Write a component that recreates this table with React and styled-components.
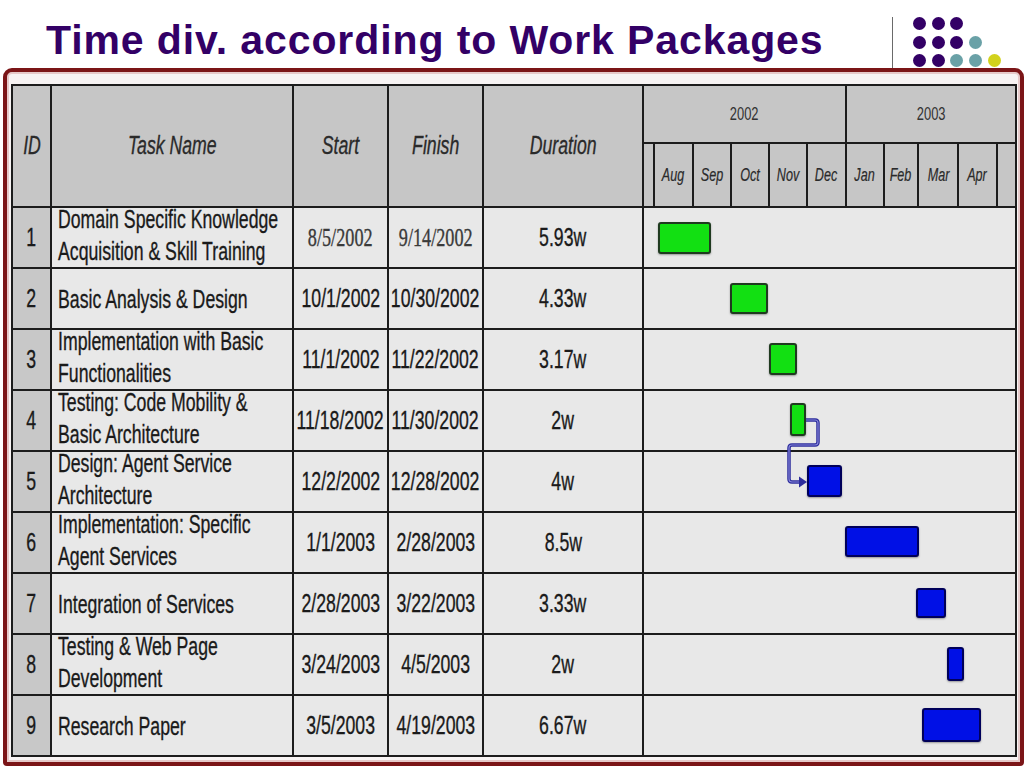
import React from "react";
import styled, { createGlobalStyle } from "styled-components";

const GlobalStyle = createGlobalStyle`
  body {
    margin: 0;
    background: #ffffff;
    font-family: "Liberation Sans", Arial, sans-serif;
  }
`;

const Slide = styled.div`
  width: 1024px;
  height: 768px;
  overflow: hidden;
  background: #ffffff;
`;

const Header = styled.div`
  display: flex;
  align-items: flex-start;
  height: 68px;
`;

const Title = styled.h1`
  margin: 0;
  width: 892px;
  flex-shrink: 0;
  padding: 20px 0 0 46px;
  box-sizing: border-box;
  font-family: "Liberation Sans", Arial, sans-serif;
  font-size: 41px;
  line-height: 41px;
  letter-spacing: 0.9px;
  font-weight: bold;
  color: #330066;
  white-space: nowrap;
`;

const Divider = styled.div`
  width: 1px;
  height: 51px;
  margin-top: 17px;
  background: #6a6a6a;
`;

const Logo = styled.div`
  display: grid;
  grid-template-columns: repeat(5, 13px);
  grid-auto-rows: 13px;
  column-gap: 5.7px;
  row-gap: 5.5px;
  margin: 17px 0 0 20px;
`;

const Dot = styled.span`
  width: 13px;
  height: 13px;
  border-radius: 50%;
  background: ${(p) => p.$color || "transparent"};
`;

const Frame = styled.div`
  margin-left: 3px;
  width: 1021px;
  box-sizing: border-box;
  padding: 12px 3px 5px 4px;
  border: 4px solid #7b1517;
  border-radius: 9px 9px 4px 4px;
  background: #f7f3f3;
  box-shadow: inset 0 0 0 2px #e6c9c9;
`;

const Table = styled.div`
  display: grid;
  grid-template-columns: 37px 240px 93px 93px 158px 371px;
  grid-template-rows: 120px repeat(9, 59px);
  gap: 2px;
  padding: 2px;
  background: #1c1c1c;
  color: #1a1a1a;
  -webkit-text-stroke: 0.35px currentColor;
`;

const HeadCell = styled.div`
  display: flex;
  align-items: center;
  justify-content: center;
  background: #c6c6c6;
  font-style: italic;
  font-size: 26px;
  color: #2a2a2a;
  padding-bottom: 2px;
`;

const Squeeze = styled.span`
  display: inline-block;
  white-space: nowrap;
  transform: scaleX(${(p) => p.$sx || 0.68});
  transform-origin: ${(p) => p.$origin || "center"};
`;

const GanttHead = styled.div`
  display: grid;
  grid-template-rows: 56px 62px;
  gap: 2px;
  background: #1c1c1c;
`;

const YearRow = styled.div`
  display: grid;
  grid-template-columns: 201px 168px;
  gap: 2px;
`;

const MonthRow = styled.div`
  display: grid;
  grid-template-columns: ${(p) => p.$cols};
  gap: 2px;
`;

const Year = styled.div`
  display: flex;
  align-items: center;
  justify-content: center;
  background: #c6c6c6;
  font-size: 19px;
  color: #333;
  -webkit-text-stroke: 0;
`;

const Month = styled.div`
  display: flex;
  align-items: center;
  justify-content: center;
  background: #c6c6c6;
  font-size: 18px;
  font-style: italic;
  color: #2a2a2a;
  -webkit-text-stroke: 0.2px currentColor;
`;

const IdCell = styled.div`
  display: flex;
  align-items: center;
  justify-content: center;
  background: #c8c8c8;
  font-size: 26px;
`;

const TaskCell = styled.div`
  display: flex;
  flex-direction: column;
  justify-content: center;
  padding: 0 0 ${(p) => (p.$lines > 1 ? 5 : 0)}px 6px;
  background: #e8e8e8;
  font-size: 26px;
  line-height: 32px;
`;

const Cell = styled.div`
  display: flex;
  align-items: center;
  justify-content: center;
  background: #e8e8e8;
  font-size: 26px;
  font-family: ${(p) =>
    p.$serif ? '"Liberation Serif", "Times New Roman", serif' : "inherit"};
  color: ${(p) => (p.$serif ? "#3a3a3a" : "inherit")};
`;

const GanttCell = styled.div`
  position: relative;
  background: #e8e8e8;
`;

const Bar = styled.div`
  position: absolute;
  box-sizing: border-box;
  border-radius: 3px;
  border: 2px solid ${(p) => (p.$kind === "green" ? "#1f3a1f" : "#00005a")};
  background: ${(p) => (p.$kind === "green" ? "#12e012" : "#0010e6")};
  box-shadow: 0 1px 2px rgba(0, 0, 0, 0.35);
`;

const Link = styled.svg`
  position: absolute;
  left: 140px;
  top: 20px;
  overflow: visible;
  z-index: 2;
`;

const logoDots = [
  "#330066", "#330066", "#330066", null, null,
  "#330066", "#330066", "#330066", "#6aa1a7", null,
  "#330066", "#330066", "#6aa1a7", "#6aa1a7", "#d2d21c",
];

const months = [
  { w: 9, label: "" },
  { w: 37, label: "Aug" },
  { w: 36, label: "Sep" },
  { w: 36, label: "Oct" },
  { w: 36, label: "Nov" },
  { w: 37, label: "Dec" },
  { w: 36, label: "Jan" },
  { w: 32, label: "Feb" },
  { w: 38, label: "Mar" },
  { w: 37, label: "Apr" },
  { w: 17, label: "" },
];

const tasks = [
  {
    id: 1,
    name: ["Domain Specific Knowledge", "Acquisition & Skill Training"],
    start: "8/5/2002",
    finish: "9/14/2002",
    dur: "5.93w",
    serif: true,
    bar: { left: 14, top: 14, w: 53, h: 32, kind: "green" },
  },
  {
    id: 2,
    name: ["Basic Analysis & Design"],
    start: "10/1/2002",
    finish: "10/30/2002",
    dur: "4.33w",
    bar: { left: 86, top: 14, w: 38, h: 31, kind: "green" },
  },
  {
    id: 3,
    name: ["Implementation with Basic", "Functionalities"],
    start: "11/1/2002",
    finish: "11/22/2002",
    dur: "3.17w",
    bar: { left: 125, top: 13, w: 28, h: 32, kind: "green" },
  },
  {
    id: 4,
    name: ["Testing: Code Mobility &", "Basic Architecture"],
    start: "11/18/2002",
    finish: "11/30/2002",
    dur: "2w",
    bar: { left: 146, top: 12, w: 16, h: 33, kind: "green" },
    link: true,
  },
  {
    id: 5,
    name: ["Design: Agent Service", "Architecture"],
    start: "12/2/2002",
    finish: "12/28/2002",
    dur: "4w",
    bar: { left: 163, top: 13, w: 35, h: 32, kind: "blue" },
  },
  {
    id: 6,
    name: ["Implementation: Specific", "Agent Services"],
    start: "1/1/2003",
    finish: "2/28/2003",
    dur: "8.5w",
    bar: { left: 201, top: 13, w: 74, h: 31, kind: "blue" },
  },
  {
    id: 7,
    name: ["Integration of Services"],
    start: "2/28/2003",
    finish: "3/22/2003",
    dur: "3.33w",
    bar: { left: 272, top: 14, w: 30, h: 30, kind: "blue" },
  },
  {
    id: 8,
    name: ["Testing & Web Page", "Development"],
    start: "3/24/2003",
    finish: "4/5/2003",
    dur: "2w",
    bar: { left: 303, top: 12, w: 17, h: 34, kind: "blue" },
  },
  {
    id: 9,
    name: ["Research Paper"],
    start: "3/5/2003",
    finish: "4/19/2003",
    dur: "6.67w",
    bar: { left: 278, top: 12, w: 59, h: 34, kind: "blue" },
  },
];

// dependency arrow from task 4 down into task 5
const Connector = () => (
  <Link width="40" height="90" viewBox="0 0 40 90">
    <path
      d="M22 9 H31 Q34 9 34 12 V31 Q34 34 31 34 H8 Q5 34 5 37 V68 Q5 71 8 71 H17"
      fill="none"
      stroke="#2c2c9c"
      strokeWidth="3.5"
    />
    <path
      d="M22 9 H31 Q34 9 34 12 V31 Q34 34 31 34 H8 Q5 34 5 37 V68 Q5 71 8 71 H17"
      fill="none"
      stroke="#8484d8"
      strokeWidth="1.2"
    />
    <polygon points="15,65.5 23,71 15,76.5" fill="#2c2c9c" />
  </Link>
);

const App = () => {
  return (
    <>
      <GlobalStyle />
      <Slide>
        <Header>
          <Title>Time div. according to Work Packages</Title>
          <Divider />
          <Logo>
            {logoDots.map((c, i) => (
              <Dot key={i} $color={c} />
            ))}
          </Logo>
        </Header>
        <Frame>
          <Table>
            <HeadCell>
              <Squeeze>ID</Squeeze>
            </HeadCell>
            <HeadCell>
              <Squeeze>Task Name</Squeeze>
            </HeadCell>
            <HeadCell>
              <Squeeze>Start</Squeeze>
            </HeadCell>
            <HeadCell>
              <Squeeze>Finish</Squeeze>
            </HeadCell>
            <HeadCell>
              <Squeeze>Duration</Squeeze>
            </HeadCell>
            <GanttHead>
              <YearRow>
                <Year>
                  <Squeeze>2002</Squeeze>
                </Year>
                <Year>
                  <Squeeze>2003</Squeeze>
                </Year>
              </YearRow>
              <MonthRow $cols={months.map((m) => m.w + "px").join(" ")}>
                {months.map((m, i) => (
                  <Month key={i}>
                    <Squeeze $sx={0.7}>{m.label}</Squeeze>
                  </Month>
                ))}
              </MonthRow>
            </GanttHead>

            {tasks.map((t) => (
              <React.Fragment key={t.id}>
                <IdCell>
                  <Squeeze>{t.id}</Squeeze>
                </IdCell>
                <TaskCell $lines={t.name.length}>
                  {t.name.map((line) => (
                    <Squeeze key={line} $origin="left">
                      {line}
                    </Squeeze>
                  ))}
                </TaskCell>
                <Cell $serif={t.serif}>
                  <Squeeze $sx={t.serif ? 0.7 : 0.68}>{t.start}</Squeeze>
                </Cell>
                <Cell $serif={t.serif}>
                  <Squeeze $sx={t.serif ? 0.7 : 0.68}>{t.finish}</Squeeze>
                </Cell>
                <Cell>
                  <Squeeze>{t.dur}</Squeeze>
                </Cell>
                <GanttCell>
                  <Bar
                    $kind={t.bar.kind}
                    style={{
                      left: t.bar.left,
                      top: t.bar.top,
                      width: t.bar.w,
                      height: t.bar.h,
                    }}
                  />
                  {t.link && <Connector />}
                </GanttCell>
              </React.Fragment>
            ))}
          </Table>
        </Frame>
      </Slide>
    </>
  );
};

export default App;
